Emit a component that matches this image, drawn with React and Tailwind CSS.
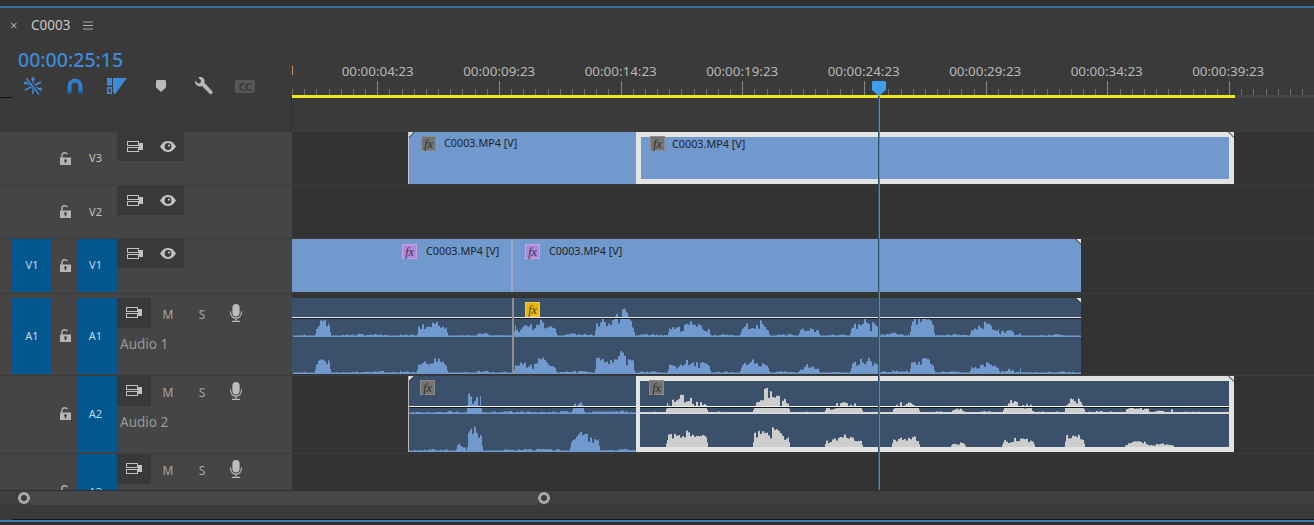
import React from 'react';

const font = { fontFamily: '"Noto Sans", "Open Sans", sans-serif' };

// pseudo noise so the wave forms stay the same on every render
const noise = (n) => {
  const v = Math.sin(n * 12.9898) * 43758.5453;
  return v - Math.floor(v);
};

// segs: [from x, to x, height]
const wavePath = (segs, base, seed = 0, scale = 1) => {
  let d = '';
  segs.forEach(([a, b, h]) => {
    const skew = noise(a + seed);
    for (let x = a; x < b; x++) {
      const coarse = noise(Math.floor(x / 4) + seed);
      const fine = noise(Math.floor(x / 2) + seed * 3 + 7);
      const pos = (x - a) / Math.max(1, b - a);
      // lopsided hump, then notches and spikes on top of it
      const peak = 0.35 + skew * 0.4;
      const hump = pos < peak ? 0.6 + 0.4 * (pos / peak) : 1 - 0.5 * ((pos - peak) / (1 - peak));
      const edge = h > 4 ? Math.min(1, (x - a + 1) / 2, (b - x) / 2) : 1;
      const hh = Math.max(1.5, h * scale * hump * edge * (0.3 + 0.35 * coarse + 0.45 * fine));
      d += `M${x} ${base}h1v${-hh.toFixed(1)}h-1z`;
    }
  });
  return d;
};

const a1Segs = [
  [293, 303, 2], [303, 305, 11], [305, 315, 2.5], [315, 331, 24], [331, 399, 3.5], [399, 401, 8], [401, 417, 3.5],
  [417, 448, 18], [448, 476, 2.5], [476, 490, 5], [490, 512, 3],
  [514, 557, 19], [557, 595, 4], [595, 635, 28], [635, 668, 3.5], [668, 711, 17], [711, 740, 3], [740, 770, 18],
  [770, 798, 3.5], [798, 820, 12], [820, 850, 3], [850, 880, 20], [880, 910, 5], [910, 935, 26], [935, 970, 3.5],
  [970, 1000, 16], [1000, 1015, 9], [1015, 1019, 3], [1019, 1021, 12], [1021, 1081, 3],
];

const a2Upper = [
  [408, 467, 3], [467, 482, 30], [482, 551, 3.5], [551, 553, 8], [553, 572, 3.5], [572, 585, 15], [585, 636, 3.5],
];
const a2Lower = [
  [408, 456, 3], [456, 467, 11], [467, 483, 34], [483, 570, 3.5], [570, 600, 22], [600, 636, 3.5],
];
const selUpper = [
  [640, 666, 2.5], [666, 708, 21], [708, 753, 3], [753, 790, 28], [790, 825, 3], [825, 863, 14], [863, 892, 3],
  [892, 920, 14], [920, 951, 3], [951, 966, 7], [966, 1002, 3], [1002, 1035, 16], [1035, 1065, 3.5], [1065, 1085, 22],
  [1085, 1125, 3.5], [1125, 1150, 10], [1150, 1170, 3.5], [1170, 1173, 10], [1173, 1229, 3],
];
const selLower = [
  [666, 708, 20], [753, 790, 22], [825, 863, 13], [892, 920, 14], [951, 966, 7], [1002, 1035, 12], [1065, 1085, 18],
  [1125, 1150, 7], [1150, 1174, 4],
];

function Wave({ x, y, w, h, children }) {
  return (
    <svg className="absolute inset-0 w-full h-full" viewBox={`${x} ${y} ${w} ${h}`} preserveAspectRatio="none">
      {children}
    </svg>
  );
}

function Corner({ side = 'left', className = 'top-0' }) {
  const pos = side === 'left' ? 'left-0' : 'right-0';
  return (
    <svg className={`absolute ${side === 'left' ? pos : ''} ${className} w-[6px] h-[6px]`} viewBox="0 0 6 6">
      {side === 'left' ? (
        <>
          <polygon points="0,0 5,0 0,5" fill="#dedede" />
          <polygon points="5,0 6,0 0,6 0,5" fill="#2c2c2c" />
        </>
      ) : (
        <>
          <polygon points="1,0 6,0 6,5" fill="#dedede" />
          <polygon points="0,0 1,0 6,5 6,6" fill="#2c2c2c" />
        </>
      )}
    </svg>
  );
}

function Fx({ color, className = '' }) {
  const tone = {
    gray: 'bg-[#747474] border-[#8a8a8a] text-[#2e2e2e]',
    purple: 'bg-[#b08bd8] border-[#c3a3e4] text-[#3c2a55]',
    yellow: 'bg-[#e6b70f] border-[#f0cb45] text-[#4b3b05]',
  }[color];
  return (
    <span
      className={`flex shrink-0 items-center justify-center w-[15px] h-[15px] border italic text-[12px] leading-none ${tone} ${className}`}
      style={{ fontFamily: '"Liberation Serif", serif' }}
    >
      fx
    </span>
  );
}

function ClipName() {
  return <span className="text-[10.8px] leading-[14px] text-[#20242a] whitespace-nowrap">C0003.MP4 [V]</span>;
}

function ClipToggle() {
  return (
    <svg width="16" height="12" viewBox="0 0 16 12" fill="none" stroke="#c2c2c2" strokeWidth="1">
      <rect x="0.5" y="0.5" width="11" height="4" />
      <rect x="0.5" y="6.5" width="11" height="4" />
      <rect x="12" y="2" width="4" height="7" fill="#c2c2c2" stroke="none" />
    </svg>
  );
}

function EyeIcon() {
  return (
    <svg width="16" height="11" viewBox="0 0 16 11">
      <path d="M0 5.5C2.5 1.8 5 0 8 0s5.5 1.8 8 5.5C13.5 9.2 11 11 8 11S2.5 9.2 0 5.5z" fill="#c4c4c4" />
      <circle cx="8" cy="5.5" r="3.4" fill="#3a3a3a" />
      <circle cx="9" cy="4.6" r="1.1" fill="#c4c4c4" />
    </svg>
  );
}

function LockIcon() {
  return (
    <svg className="ml-px mb-px" width="11" height="13" viewBox="0 0 11 13">
      <path d="M2 6V3.2C2 1.6 3.2.7 4.7.7c1.2 0 2.2.5 2.8 1.4" fill="none" stroke="#b5b5b5" strokeWidth="1.4" />
      <path d="M0 5.5h11V13H0z" fill="#b5b5b5" />
      <circle cx="5.5" cy="8.6" r="1.3" fill="#3c3c3c" />
      <rect x="4.9" y="8.8" width="1.2" height="2.4" fill="#3c3c3c" />
    </svg>
  );
}

function MicIcon() {
  return (
    <svg width="12" height="18" viewBox="0 0 12 18">
      <rect x="2.4" y="0" width="7.2" height="12.4" rx="3.6" fill="#bcbcbc" />
      <path d="M.7 7.5v1.6c0 3 2.4 5 5.3 5s5.3-2 5.3-5V7.5" fill="none" stroke="#bcbcbc" strokeWidth="1.1" />
      <path d="M6 14v2.5M2 17.3h8" fill="none" stroke="#bcbcbc" strokeWidth="1.3" />
    </svg>
  );
}

function Patch({ label, active, className = '' }) {
  if (!label) return <div className="w-10 shrink-0" />;
  return (
    <div
      className={`w-10 shrink-0 flex items-center justify-center text-[11px] ${
        active ? 'bg-[#03578f] text-[#b8dcf2]' : 'text-[#c2c2c2]'
      } ${className}`}
    >
      {label}
    </div>
  );
}

function VideoControls() {
  return (
    <div className="w-[67px] h-[29px] bg-[#393939] flex">
      <div className="w-[34px] flex items-center justify-center pl-px"><ClipToggle /></div>
      <div className="w-[33px] flex items-center justify-center"><EyeIcon /></div>
    </div>
  );
}

function AudioControls({ name }) {
  return (
    <div className="flex flex-col">
      <div className="flex h-[30px] items-center text-[12px] text-[#a6a6a6]">
        <div className="w-[34px] h-full bg-[#393939] flex items-center justify-center"><ClipToggle /></div>
        <div className="w-[34px] text-center pt-[3px]">M</div>
        <div className="w-[34px] text-center pt-[3px]">S</div>
        <div className="w-[34px] flex justify-center pb-[1px]"><MicIcon /></div>
      </div>
      {name && <div className="pl-[3px] mt-[6px] text-[13.5px] leading-[20px] text-[#999999]">{name}</div>}
    </div>
  );
}

function Track({ heightClass, source, target, activeTarget, headClass = '', audio, name, children }) {
  return (
    <div className={`flex shrink-0 border-t border-[#3b3b3b] overflow-hidden ${heightClass}`}>
      <div className={`w-[292px] shrink-0 bg-[#454545] flex pl-3 ${headClass}`}>
        <Patch label={source} active />
        <div className="w-[25px] shrink-0 flex items-center justify-center"><LockIcon /></div>
        <Patch label={target} active={activeTarget} className="pr-[3px]" />
        <div>{audio ? <AudioControls name={name} /> : <VideoControls />}</div>
      </div>
      <div className="flex-1 relative bg-[#333333]">{children}</div>
    </div>
  );
}

function RulerTicks() {
  const minor = [];
  const major = [];
  for (let i = -7; i < 87; i++) {
    const x = Math.round(85.2 + i * 12.17) + 0.5;
    if (x < 0) continue;
    if (i % 10 === 0) major.push(`M${x} 0V14`);
    else minor.push(`M${x} 8V14`);
  }
  return (
    <svg className="block mt-px w-[1022px] h-[14px]" viewBox="0 0 1022 14" fill="none" strokeWidth="1">
      <path d={minor.join('')} stroke="#6c6c6c" />
      <path d={major.join('')} stroke="#858585" />
    </svg>
  );
}

const rulerLabels = ['04', '09', '14', '19', '24', '29', '34', '39'];

function Tool({ className = '', children }) {
  return <div className={`w-[42px] shrink-0 flex items-center justify-center ${className}`}>{children}</div>;
}

function Tools() {
  return (
    <div className="flex h-[18px] mt-[5px] pl-3">
      <Tool>
        <svg width="20" height="18" viewBox="0 0 20 18" fill="none" stroke="#3d8bd8" strokeWidth="1.6">
          <path d="M10 1v16M2 5l16 8M2 13l16-8" />
          <path d="M4 1l12 16" stroke="#393939" strokeWidth="3.5" />
          <path d="M3.5 1.5l12.5 16" strokeWidth="1.4" />
          <circle cx="10" cy="2" r="1.8" fill="#3d8bd8" stroke="none" />
          <circle cx="2.5" cy="6" r="1.6" fill="#3d8bd8" stroke="none" />
          <circle cx="17.5" cy="12" r="1.6" fill="#3d8bd8" stroke="none" />
        </svg>
      </Tool>
      <Tool>
        <svg width="16" height="16" viewBox="0 0 16 16" fill="none">
          <path d="M2.5 15V8a5.5 5.5 0 0 1 11 0v7" stroke="#2f7fd0" strokeWidth="4" />
          <path d="M.5 13h4v3h-4zM11.5 13h4v3h-4z" fill="#1d5d9c" />
        </svg>
      </Tool>
      <Tool>
        <svg width="20" height="17" viewBox="0 0 20 17" fill="#3d8bd8">
          <path d="M0 0h5v7.5H0zM0 9h5v7H0z" />
          <path d="M1.5 10.6h2.2v3.8H1.5z" fill="#393939" />
          <path d="M6 0H20L14 8 8 16.5 6 14z" />
        </svg>
      </Tool>
      <Tool className="pl-[4px]">
        <svg width="10" height="12" viewBox="0 0 10 12" fill="#b9b9b9">
          <path d="M0 1l1-1h8l1 1v6.5L5 12 0 7.5z" />
        </svg>
      </Tool>
      <Tool className="pl-[4px]">
        <svg width="19" height="18" viewBox="0 0 19 18" fill="#b5b5b5">
          <path d="M1 3.4 4.3 6.4l2.2-.6.6-2.2L4.2.6C6.3-.4 8.7.2 9.9 2c.8 1.2.9 2.5.5 3.7l7.7 8.2c.8.9.8 1.9 0 2.7-.9.9-1.9.9-2.8 0L8 9c-1.4.7-3.1.6-4.5-.3C1.500 7.400.6 5.400 1 3.400z" />
        </svg>
      </Tool>
      <Tool className="pl-[4px]">
        <div className="w-5 h-[13px] rounded-[2px] bg-[#575757] flex items-center justify-center text-[11px] leading-none font-bold tracking-[-0.5px] text-[#383838]">
          CC
        </div>
      </Tool>
    </div>
  );
}

export default function App() {
  return (
    <div className="w-[1314px] h-[525px] overflow-hidden bg-[#3a3a3a] flex flex-col text-[#c8c8c8]" style={font}>
      <div className="h-[6px] shrink-0 bg-[#2f2f2f]" />
      <div className="h-[2px] shrink-0 bg-[#35719f]" />

      <div className="flex-1 relative flex flex-col">
        {/* panel header, ruler */}
        <div className="h-[123px] shrink-0 flex">
          <div className="w-[292px] shrink-0 relative">
            <div className="flex items-center h-[20px] mt-[7px] pl-[10px]">
              <span className="w-[21px] text-[13px] leading-none text-[#a8a8a8]">×</span>
              <span className="text-[13.5px] text-[#c8c8c8]">C0003</span>
              <svg className="ml-[13px]" width="10" height="9" viewBox="0 0 10 9" stroke="#a8a8a8" strokeWidth="1.2">
                <path d="M0 1h10M0 4.5h10M0 8h10" />
              </svg>
            </div>
            <div className="pl-[18px] mt-[13px] text-[19.5px] leading-[24px] font-medium text-[#3d8bd8]">00:00:25:15</div>
            <Tools />
            <div className="mt-[2px] w-3 h-px bg-[#111111]" />
            <div className="absolute right-0 top-[90px] bottom-0 w-px bg-[#2f2f2f]" />
          </div>
          <div className="flex-1 relative">
            <div className="absolute left-0 top-[58px] w-px h-[9px] bg-[#c98d62]" />
            <div className="flex pl-[25px] mt-[54px] h-[18px]">
              {rulerLabels.map((s) => (
                <span key={s} className="w-[121.5px] shrink-0 text-center text-[13.4px] leading-[18px] text-[#b8b8b8] whitespace-nowrap">
                  00:00:{s}:23
                </span>
              ))}
            </div>
            <RulerTicks />
            <div className="flex h-[3px]">
              <div className="w-[943px] bg-[#eeea1e]" />
              <div className="flex-1 bg-[#464646]" />
            </div>
          </div>
        </div>

        {/* tracks: the clips sit on the lane like items on a canvas */}
        <Track heightClass="h-[54px]" target="V3">
          <div className="absolute left-[116px] top-0 w-[228px] h-[52px] bg-[#7199cd] border-l border-[#c8c8c8] flex items-start gap-[8px] pl-[12px] pt-[4px]">
            <Corner />
            <Fx color="gray" />
            <ClipName />
          </div>
          <div className="absolute left-[344px] top-0 w-[598px] h-[52px] bg-[#7199cd] border-[5px] border-[#e3e3e3] flex items-start gap-[7px] pl-[9px]">
            <Fx color="gray" className="-mt-px" />
            <ClipName />
            <Corner side="right" className="-top-[5px] -right-[5px]" />
          </div>
        </Track>

        <Track heightClass="h-[53px]" target="V2" />

        <Track heightClass="h-[55px]" source="V1" target="V1" activeTarget headClass="pb-px">
          <div className="absolute left-0 top-0 w-[789px] h-[53px] bg-[#7199cd] flex">
            <div className="w-[219px] shrink-0 flex items-start gap-[9px] pl-[110px] pt-[5px]">
              <Fx color="purple" />
              <ClipName />
            </div>
            <div className="flex-1 border-l-2 border-[#9aa9bd] flex items-start gap-[9px] pl-[12px] pt-[5px]">
              <Fx color="purple" />
              <ClipName />
            </div>
            <Corner side="right" className="top-0 right-0" />
          </div>
        </Track>

        <Track heightClass="h-[82px]" source="A1" target="A1" activeTarget audio name="Audio 1" headClass="pt-[4px] pb-px">
          <div className="absolute left-0 top-[4px] w-[789px] h-[76px] bg-[#3a506b] pl-[233px] pt-[4px]">
            <Wave x={292} y={298} w={789} h={76}>
              <path d={wavePath(a1Segs, 337, 0)} fill="#7099d0" />
              <path d={wavePath(a1Segs, 374, 37, 0.92)} fill="#7099d0" />
              <rect x="292" y="317" width="789" height="1" fill="#e6e6e6" />
              <rect x="292" y="318" width="789" height="1" fill="#1c2026" />
              <rect x="512" y="298" width="2" height="76" fill="#8d8f92" />
            </Wave>
            <Corner side="right" className="top-0 right-0" />
            <Fx color="yellow" className="relative" />
          </div>
        </Track>

        <Track heightClass="h-[78px]" target="A2" activeTarget audio name="Audio 2" headClass="pb-px">
          <div className="absolute left-[116px] top-0 w-[228px] h-[76px] bg-[#3a506b] border-l border-[#b8b8b8] pl-[11px] pt-[4px]">
            <Wave x={409} y={376} w={227} h={76}>
              <path d={wavePath(a2Upper, 414, 5)} fill="#7099d0" />
              <path d={wavePath(a2Lower, 452, 11)} fill="#7099d0" />
              <rect x="409" y="406" width="227" height="1" fill="#eeeeee" />
              <rect x="409" y="407" width="227" height="1" fill="#14181d" />
            </Wave>
            <Corner />
            <Fx color="gray" className="relative" />
          </div>
          <div className="absolute left-[344px] top-0 w-[598px] h-[76px] bg-[#3a506b] border-[5px] border-l-[4px] border-[#e3e3e3] pl-[9px]">
            <Wave x={640} y={381} w={589} h={66}>
              <path d={wavePath(selUpper, 414, 3)} fill="#cdcdcd" />
              <path d={wavePath(selLower, 447, 19)} fill="#cdcdcd" />
              <rect x="640" y="412" width="589" height="2" fill="#d6d6d6" />
              <rect x="640" y="406" width="589" height="1" fill="#f2f2f2" />
              <rect x="640" y="407" width="589" height="1" fill="#14181d" />
            </Wave>
            <Fx color="gray" className="relative -mt-px" />
            <Corner side="right" className="-top-[5px] -right-[5px]" />
          </div>
        </Track>

        {/* last track is cut off by the scroll bar */}
        <Track heightClass="h-[37px]" target="A3" activeTarget audio headClass="h-[76px] self-start" />

        {/* playhead */}
        <svg className="absolute left-[872px] top-[73px]" width="14" height="15" viewBox="0 0 14 15">
          <path d="M1 0h12l1 1v8l-7 6-7-6V1z" fill="#3f9ded" />
        </svg>
        <div className="absolute left-[878px] top-[88px] w-[2px] h-[394px] bg-[#3a8ed8] border-l border-[#35556f]" />

        {/* scroll bar */}
        <div className="h-[15px] shrink-0 border-t border-[#2f2f2f] bg-[#3e3e3e] flex items-center pl-[18px]">
          <div className="w-3 h-3 rounded-full border-[3px] border-[#a9a9a9] bg-[#3a3a3a] shrink-0" />
          <div className="w-[508px] h-full bg-[#474747] shrink-0" />
          <div className="w-3 h-3 rounded-full border-[3px] border-[#a9a9a9] bg-[#3a3a3a] shrink-0" />
        </div>
        <div className="flex-1 bg-[#3a3a3a]" />
      </div>

      <div className="h-px shrink-0 ml-3 bg-[#151515]" />
      <div className="h-[2px] shrink-0 bg-[#3f7fb5]" />
      <div className="h-[3px] shrink-0 bg-[#2f2f2f]" />
    </div>
  );
}
